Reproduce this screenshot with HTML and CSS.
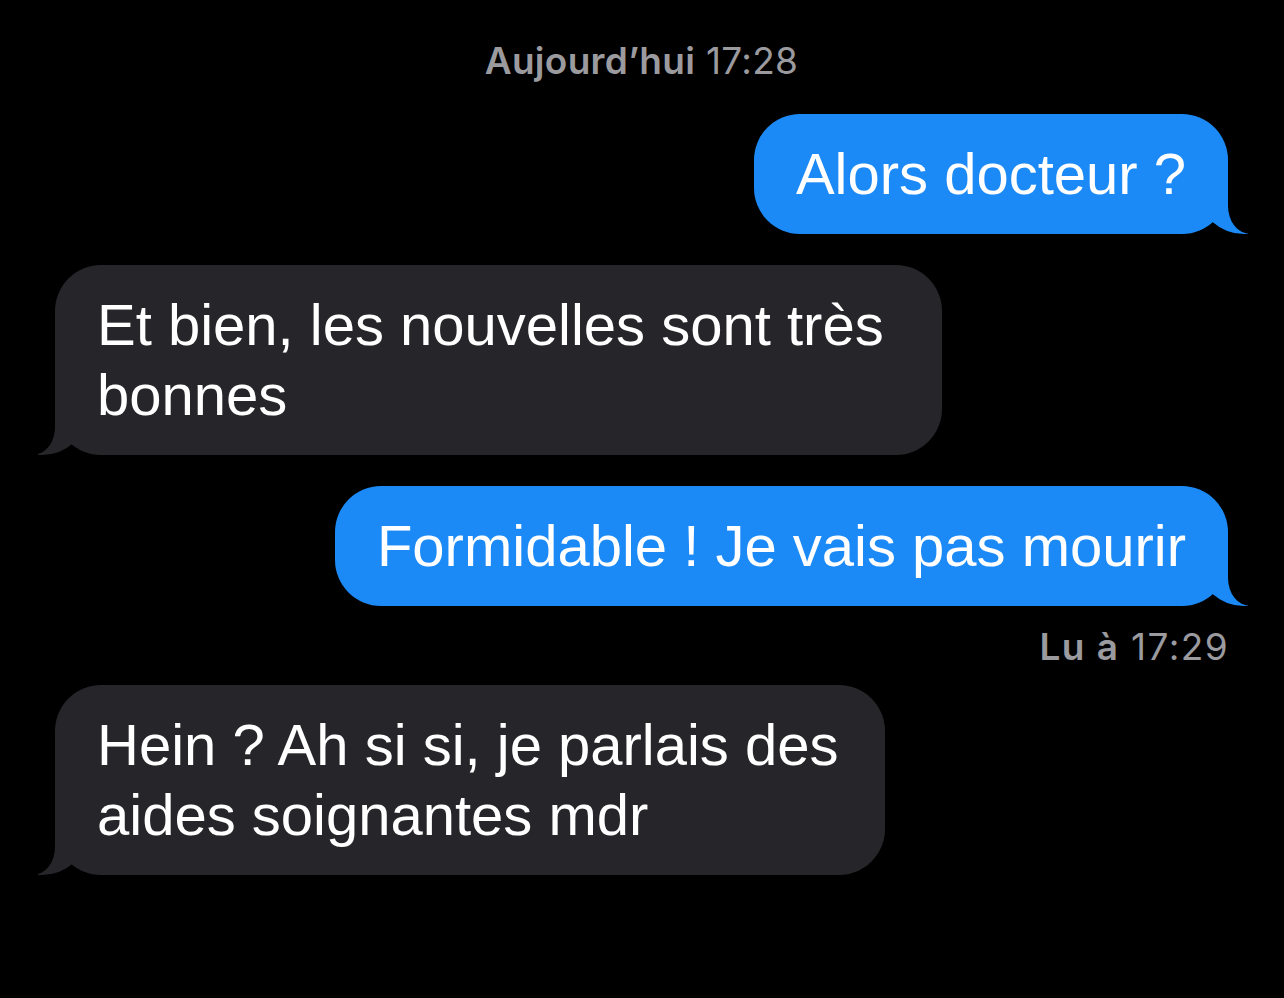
FILE: index.html
```html
<!DOCTYPE html>
<html lang="fr">
<head>
<meta charset="utf-8">
<title>Messages</title>
<link rel="stylesheet" href="styles.css">
</head>
<body>
<div class="thread">
  <div class="stamp"><b>Aujourd’hui</b> 17:28</div>
  <div class="msg sent">Alors docteur ?</div>
  <div class="msg recv b-news">Et bien, les nouvelles sont très<br>bonnes</div>
  <div class="msg sent">Formidable ! Je vais pas mourir</div>
  <div class="receipt"><b>Lu à</b> 17:29</div>
  <div class="msg recv b-aides">Hein ? Ah si si, je parlais des<br>aides soignantes mdr</div>
</div>
</body>
</html>
```
FILE: styles.css
```css
html, body {
  margin: 0;
  background: #000;
}
body {
  font-family: "Liberation Sans", Arial, sans-serif;
  color: #fff;
}
.thread {
  display: flex;
  flex-direction: column;
  box-sizing: border-box;
  height: 998px;
  overflow: hidden;
  padding: 38px 56px 0 55px;
}
.stamp,
.receipt {
  font-family: Inter, "Liberation Sans", sans-serif;
  font-size: 37px;
  color: #9a9a9f;
}
.stamp {
  align-self: center;
  line-height: 45px;
  letter-spacing: 0.3px;
}
.stamp b, .receipt b {
  font-weight: 600;
}
.receipt {
  align-self: flex-end;
  margin-top: 19px;
  line-height: 44px;
  letter-spacing: 1.4px;
  margin-right: -1px;
}
.msg {
  position: relative;
  isolation: isolate;
  box-sizing: border-box;
  font-size: 58px;
  line-height: 70px;
  padding: 25px 42px;
  border-radius: 46px;
  margin-top: 31px;
}
.sent {
  align-self: flex-end;
  background: #1b8af7;
}
.recv {
  align-self: flex-start;
  background: #262529;
}
.receipt + .recv {
  margin-top: 16px;
}
.b-news { width: 887px; }
.b-aides { width: 830px; }

.msg::before,
.msg::after {
  content: "";
  position: absolute;
  z-index: -1;
  bottom: 0;
  height: 70px;
}
.sent::before {
  right: -20px;
  width: 48px;
  background: #1b8af7;
  border-bottom-left-radius: 44px 40px;
}
.sent::after {
  right: -74px;
  width: 74px;
  background: #000;
  border-bottom-left-radius: 22px 28px;
}
.recv::before {
  left: -17px;
  width: 48px;
  background: #262529;
  border-bottom-right-radius: 44px 40px;
}
.recv::after {
  left: -74px;
  width: 74px;
  background: #000;
  border-bottom-right-radius: 22px 28px;
}
```
